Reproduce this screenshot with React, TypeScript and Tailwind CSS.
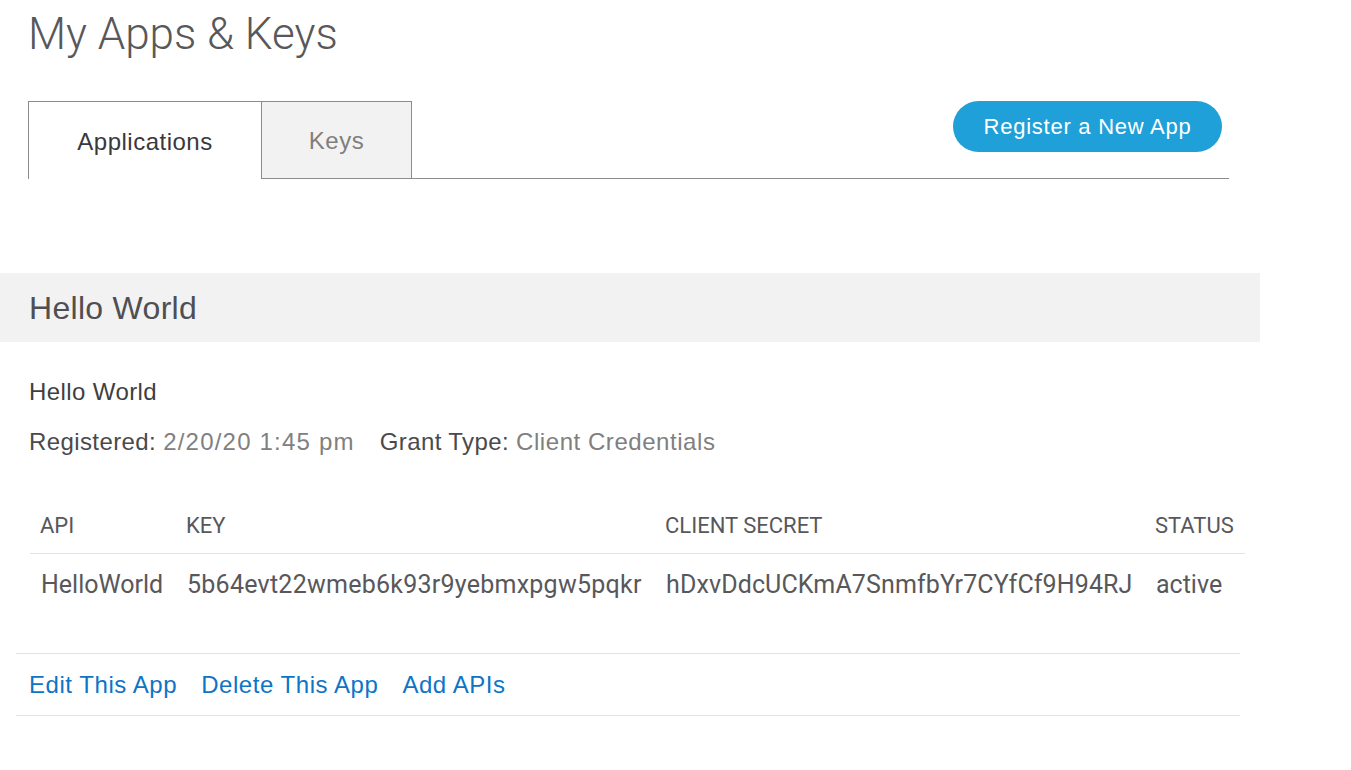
const sans = { fontFamily: '"Liberation Sans", Arial, sans-serif' }

const ROWS = [
  {
    api: 'HelloWorld',
    key: '5b64evt22wmeb6k93r9yebmxpgw5pqkr',
    secret: 'hDxvDdcUCKmA7SnmfbYr7CYfCf9H94RJ',
    status: 'active',
  },
]

export default function App() {
  return (
    <div className="min-h-[770px] w-[1351px] bg-white text-[#4a4a4c]" style={sans}>
      <div className="pl-[28px] pt-[13px]">
        <h1 className="h-[42px] font-['Roboto',sans-serif] text-[44px] font-light leading-[42px] text-[#58585b]">
          My Apps &amp; Keys
        </h1>

        <div className="mt-[46px] flex w-[1201px] items-start">
          <button
            type="button"
            className="flex h-[78px] w-[234px] items-center justify-center border border-b-0 border-[#8c8c8c] bg-white pt-[2px] text-[24px] tracking-[0.5px] text-[#39393b]"
          >
            Applications
          </button>
          <button
            type="button"
            className="flex h-[78px] w-[150px] items-center justify-center border border-l-0 border-[#8c8c8c] bg-[#f2f2f2] pt-[2px] text-[24px] tracking-[0.5px] text-[#7f7f7f]"
          >
            Keys
          </button>
          <div className="flex h-[78px] flex-1 items-start justify-end border-b border-[#8c8c8c]">
            <button
              type="button"
              className="mr-[7px] h-[51px] w-[269px] rounded-full bg-[#1fa0d8] text-[22px] tracking-[0.75px] text-white"
            >
              Register a New App
            </button>
          </div>
        </div>
      </div>

      <div className="mt-[94px] flex h-[69px] w-[1260px] items-center bg-[#f2f2f2] pl-[29px]">
        <h2 className="text-[32px] tracking-[0.3px] text-[#4f4f52]">Hello World</h2>
      </div>

      <div className="pl-[29px]">
        <p className="mt-[35px] h-[30px] text-[24px] leading-[30px] tracking-[0.4px] text-[#3f3f41]">
          Hello World
        </p>
        <p className="mt-[20px] h-[30px] text-[24px] leading-[30px] tracking-[0.4px]">
          <span className="text-[#4a4a4c]">Registered: </span>
          <span className="tracking-[1.2px] text-[#808080]">2/20/20 1:45 pm</span>
          <span className="ml-[25px] text-[#4a4a4c]">Grant Type: </span>
          <span className="tracking-[0.55px] text-[#808080]">Client Credentials</span>
        </p>

        <div className="ml-[1px] mt-[40px] w-[1215px] font-['Roboto',sans-serif]">
          <div className="grid h-[57px] grid-cols-[146px_479px_490px_100px] items-center border-b border-[#e3e3e3] text-[22px] uppercase text-[#58585b]">
            <div className="pl-[10px]">API</div>
            <div className="pl-[10px]">Key</div>
            <div className="pl-[10px]">Client Secret</div>
            <div className="pl-[10px]">Status</div>
          </div>
          {ROWS.map((row) => (
            <div
              key={row.key}
              className="grid h-[62px] grid-cols-[146px_479px_490px_100px] items-center text-[25px] text-[#58585b]"
            >
              <div className="pl-[11px]">{row.api}</div>
              <div className="pl-[11px] tracking-[0.25px]">{row.key}</div>
              <div className="pl-[11px] tracking-[0.12px]">{row.secret}</div>
              <div className="pl-[11px]">{row.status}</div>
            </div>
          ))}
        </div>
      </div>

      <div className="ml-[16px] mt-[37px] flex h-[63px] w-[1224px] items-center gap-[24px] border-y border-[#e3e3e3] pl-[13px] text-[24px] tracking-[0.55px] text-[#0d74c6]">
        <a href="#" className="hover:underline">Edit This App</a>
        <a href="#" className="hover:underline">Delete This App</a>
        <a href="#" className="hover:underline">Add APIs</a>
      </div>
    </div>
  )
}
